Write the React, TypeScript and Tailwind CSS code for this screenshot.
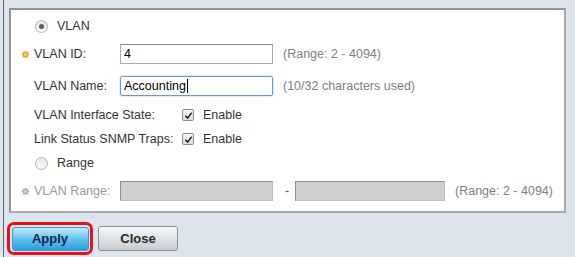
import React from 'react';

const Star: React.FC<{ color: string }> = ({ color }) => (
  <svg width="9" height="9" viewBox="0 0 18 18" className="shrink-0">
    <polygon
      fill={color}
      points="9,0 10.9,4.4 15.4,2.6 13.6,7.1 18,9 13.6,10.9 15.4,15.4 10.9,13.6 9,18 7.1,13.6 2.6,15.4 4.4,10.9 0,9 4.4,7.1 2.6,2.6 7.1,4.4"
    />
    <circle cx="9" cy="9" r="3" fill="#fff" opacity="0.55" />
  </svg>
);

const Radio: React.FC<{ checked?: boolean }> = ({ checked }) => (
  <span className="w-[13px] h-[13px] rounded-full border border-[#b4b4b4] bg-gradient-to-b from-[#e6e6e6] to-[#fafafa] flex items-center justify-center shrink-0">
    {checked && <span className="w-[5px] h-[5px] rounded-full bg-[#5a5a5a]" />}
  </span>
);

const Checkbox: React.FC = () => (
  <span className="w-[12px] h-[12px] border border-[#8e8e8e] rounded-[2px] bg-gradient-to-b from-[#f4f4f4] to-[#dedede] flex items-center justify-center shrink-0">
    <svg width="9" height="9" viewBox="0 0 10 10">
      <path d="M1.5 5.2 L4 7.8 L8.6 1.8" stroke="#222" strokeWidth="1.7" fill="none" />
    </svg>
  </span>
);

const Hint: React.FC<{ children: React.ReactNode; className?: string }> = ({ children, className }) => (
  <span className={`text-[#808080] ${className ?? ''}`}>{children}</span>
);

export default function App() {
  return (
    <div className="w-[575px] h-[257px] bg-[#dde4eb] flex overflow-hidden text-[12.5px] text-[#333] font-['Liberation_Sans',Arial,sans-serif]">
      <div className="w-[3px] shrink-0" />
      <div className="flex-1 border-l border-[#5f6468] flex flex-col">
        <div className="h-[8px]" />
        {/* Panel */}
        <div className="ml-[5px] w-[557px] h-[205px] bg-white border-2 border-[#a4acb2] border-t-[#8d959b] border-l-[#8d959b] flex flex-col pt-[6px]">
          <div className="h-[20px] flex items-center pl-[24px]">
            <Radio checked />
            <span className="ml-[9px]">VLAN</span>
          </div>

          <div className="h-[20px] mt-[8px] flex items-center pl-[10px]">
            <Star color="#f39a25" />
            <span className="ml-[4px] w-[86px]">VLAN ID:</span>
            <div className="w-[153px] h-[20px] border border-[#a9a9a9] border-t-[#8a8a8a] flex items-center px-[3px] text-black">4</div>
            <Hint className="ml-[10px]">(Range: 2 - 4094)</Hint>
          </div>

          <div className="h-[20px] mt-[12px] flex items-center pl-[23px]">
            <span className="w-[86px]">VLAN Name:</span>
            <div className="w-[153px] h-[20px] border border-[#6f95d4] rounded-[2px] shadow-[0_0_2px_#9cb8e6] flex items-center px-[3px] text-black">
              Accounting
              <span className="w-px h-[14px] bg-black ml-px" />
            </div>
            <Hint className="ml-[10px]">(10/32 characters used)</Hint>
          </div>

          <div className="h-[20px] mt-[9px] flex items-center pl-[23px]">
            <span className="w-[148px]">VLAN Interface State:</span>
            <Checkbox />
            <span className="ml-[9px]">Enable</span>
          </div>

          <div className="h-[20px] mt-[4px] flex items-center pl-[23px]">
            <span className="w-[148px]">Link Status SNMP Traps:</span>
            <Checkbox />
            <span className="ml-[9px]">Enable</span>
          </div>

          <div className="h-[20px] mt-[4px] flex items-center pl-[24px]">
            <Radio />
            <span className="ml-[9px]">Range</span>
          </div>

          <div className="h-[20px] mt-[8px] flex items-center pl-[10px] text-[#9a9a9a]">
            <Star color="#a8a8a8" />
            <span className="ml-[4px] w-[86px]">VLAN Range:</span>
            <div className="w-[153px] h-[20px] bg-[#cfcfcf] border border-[#bdbdbd] border-t-[#8e8e8e] border-l-[#8e8e8e]" />
            <span className="ml-[12px] w-[10px] text-[#555]">-</span>
            <div className="w-[150px] h-[20px] bg-[#cfcfcf] border border-[#bdbdbd] border-t-[#8e8e8e] border-l-[#8e8e8e]" />
            <Hint className="ml-[10px]">(Range: 2 - 4094)</Hint>
          </div>
        </div>

        {/* Buttons */}
        <div className="flex items-center mt-[9px] ml-[3px]">
          <div className="w-[86px] h-[33px] border-[3px] border-[#e3121c] rounded-[7px] flex items-center justify-center">
            <button className="w-[77px] h-[24px] rounded-[3px] border border-[#4a93c2] bg-gradient-to-b from-[#c4ebfb] via-[#5fc2ee] to-[#2e9fd9] text-[#16264f] font-bold text-[13px]">
              Apply
            </button>
          </div>
          <button className="ml-[5px] w-[80px] h-[25px] rounded-[3px] border border-[#8a9196] bg-gradient-to-b from-[#f7f8f9] to-[#c8ccd0] text-[#2a2a2a] font-bold text-[13px]">
            Close
          </button>
        </div>
      </div>
    </div>
  );
}
